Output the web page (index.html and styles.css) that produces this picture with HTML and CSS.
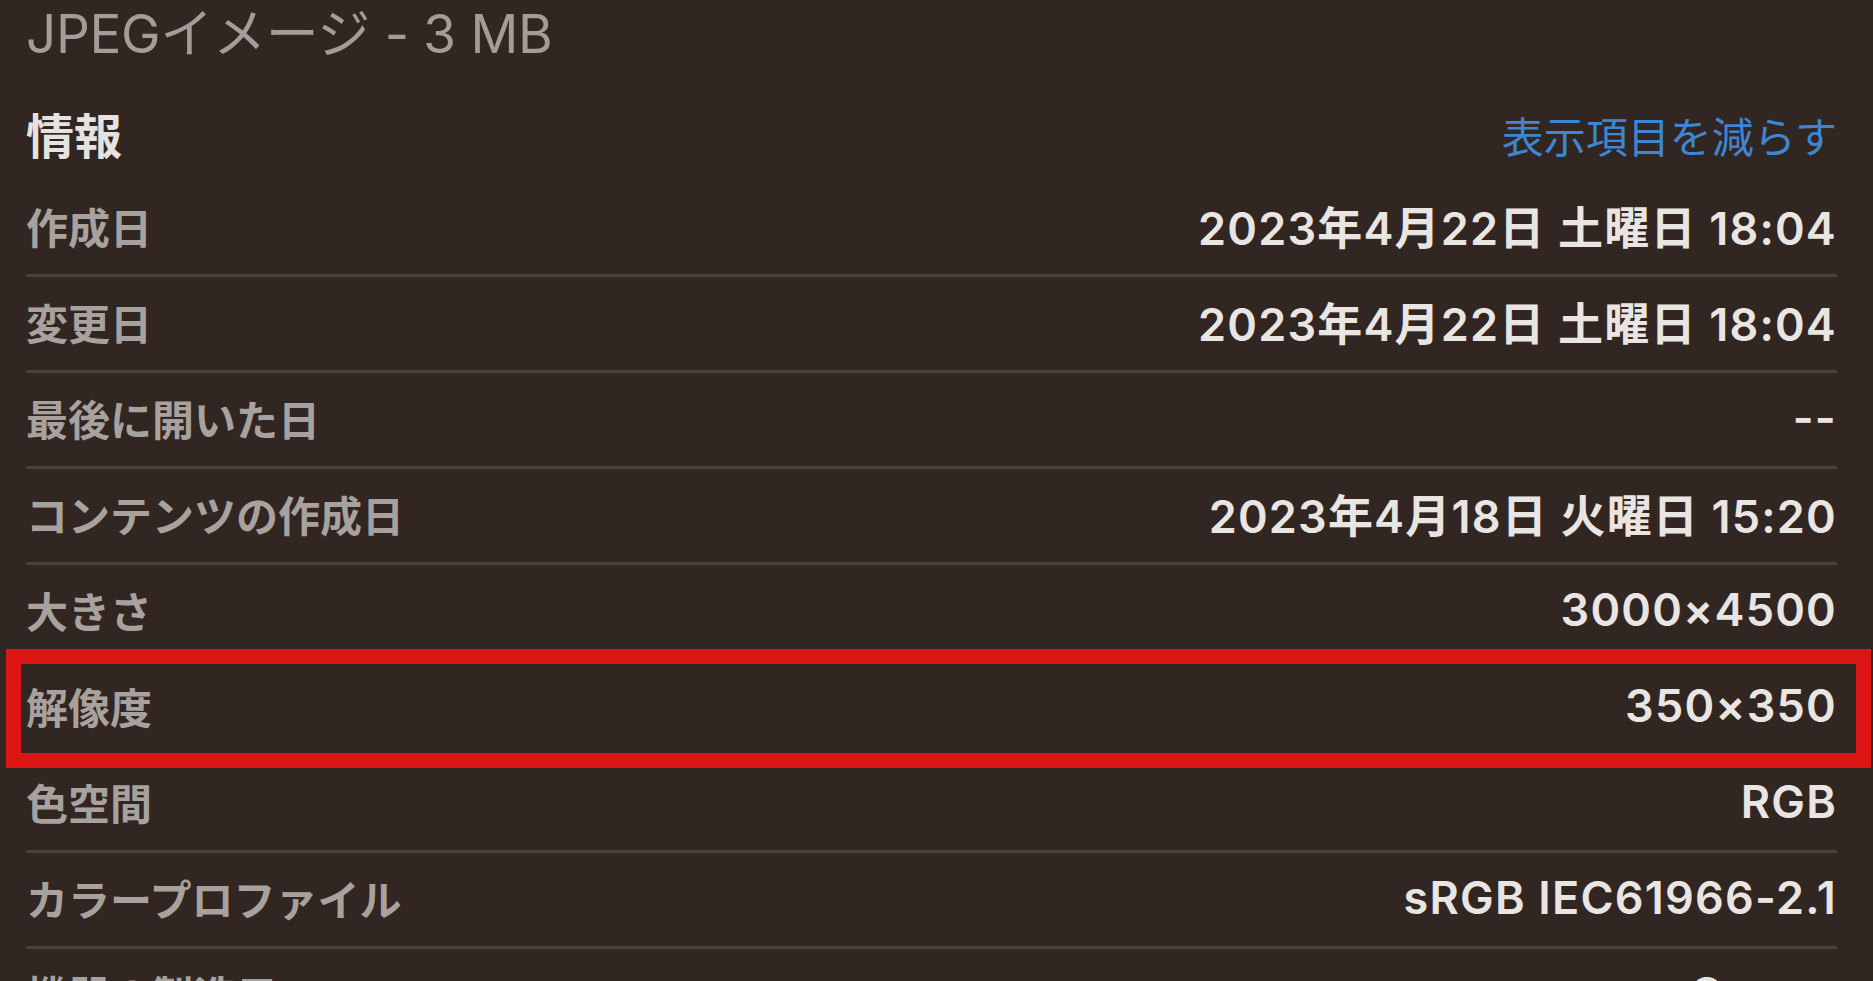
FILE: index.html
```html
<!DOCTYPE html>
<html lang="ja">
<head>
  <meta charset="UTF-8">
  <meta name="viewport" content="width=device-width, initial-scale=1.0">
  <title>情報</title>
  <link rel="stylesheet" href="styles.css">
</head>
<body>
  <div class="panel">
    <div class="kind">JPEGイメージ - 3 MB</div>
    <div class="section-head">
      <h2 class="section-title">情報</h2>
      <a class="toggle" href="#">表示項目を減らす</a>
    </div>
    <dl class="info">
      <div class="row"><dt>作成日</dt><dd>2023年4月22日 土曜日 18:04</dd></div>
      <div class="row"><dt>変更日</dt><dd>2023年4月22日 土曜日 18:04</dd></div>
      <div class="row"><dt>最後に開いた日</dt><dd>--</dd></div>
      <div class="row"><dt>コンテンツの作成日</dt><dd>2023年4月18日 火曜日 15:20</dd></div>
      <div class="row"><dt>大きさ</dt><dd>3000×4500</dd></div>
      <div class="row highlighted"><dt>解像度</dt><dd>350×350</dd></div>
      <div class="row"><dt>色空間</dt><dd>RGB</dd></div>
      <div class="row"><dt>カラープロファイル</dt><dd>sRGB IEC61966-2.1</dd></div>
      <div class="row"><dt>機器の製造元</dt><dd>Canon</dd></div>
    </dl>
  </div>
</body>
</html>
```

FILE: styles.css
```css
html, body {
  height: 100%;
}
body {
  margin: 0;
  overflow: hidden;
  background-color: #322622;
  font-family: Inter, "Noto Sans CJK JP", sans-serif;
}
.panel {
  padding: 0 36px 0 26px;
}
.kind {
  height: 85px;
  font-size: 53px;
  line-height: 68px;
  color: #a29d99;
  letter-spacing: -0.3px;
}
.section-head {
  height: 96px;
  display: flex;
  justify-content: space-between;
  align-items: center;
}
.section-title {
  margin: 0;
  font-size: 48px;
  font-weight: 700;
  color: #e6e2df;
}
.toggle {
  margin-top: 2px;
  font-size: 42px;
  color: #3e86d2;
  text-decoration: none;
}
.info {
  margin: 0;
}
.row {
  position: relative;
  height: 96px;
  padding-bottom: 5px;
  box-sizing: border-box;
  display: flex;
  justify-content: space-between;
  align-items: center;
  border-bottom: 3px solid #4a423d;
}
.row dt {
  font-size: 42px;
  font-weight: 600;
  color: #a8a29e;
}
.row dd {
  margin: 0;
  font-size: 45px;
  font-weight: 600;
  letter-spacing: 1.2px;
  color: #e8e5e2;
}
/* red marker round the resolution row */
.highlighted::after {
  content: "";
  position: absolute;
  top: -12px;
  left: -20px;
  right: -34px;
  bottom: -14px;
  border: 15px solid #de1515;
  pointer-events: none;
}
```
